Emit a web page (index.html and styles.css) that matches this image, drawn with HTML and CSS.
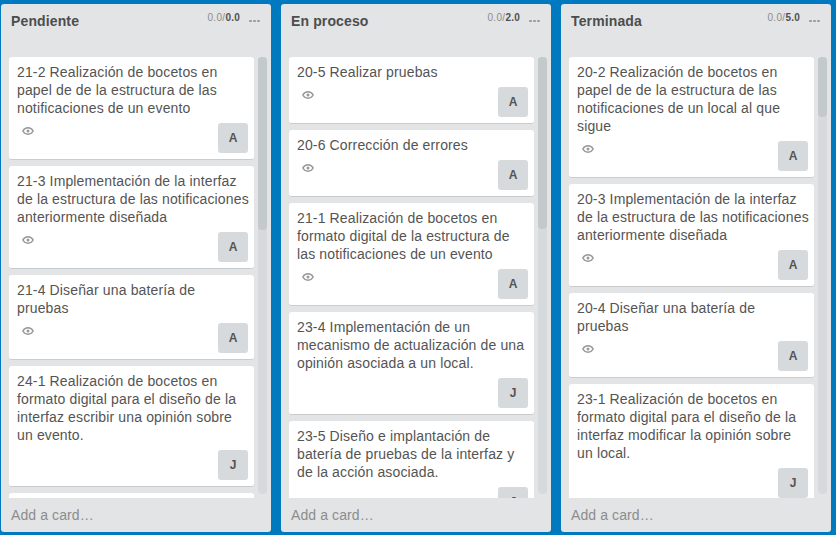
FILE: index.html
```
<!DOCTYPE html>
<html lang="es">
<head>
<meta charset="utf-8">
<title>Tablero</title>
<link rel="stylesheet" href="styles.css">
</head>
<body>
<svg class="defs" aria-hidden="true">
  <symbol id="eye" viewBox="0 0 12 8">
    <path d="M.8 4C2 1.800 3.800.8 6 .8S10 1.800 11.200 4C10 6.200 8.200 7.200 6 7.200S2 6.200.8 4Z" fill="none" stroke="currentColor" stroke-width="1.500"/>
    <circle cx="6" cy="4" r="1.500" fill="currentColor"/>
  </symbol>
</svg>
<main class="board">
  <section class="list">
    <header class="list-header"><h2>Pendiente</h2><span class="points">0.0/<b>0.0</b></span><span class="menu"><i></i><i></i><i></i></span></header>
    <div class="list-body">
      <div class="cards">
        <article class="card"><p>21-2 Realización de bocetos en papel de de la estructura de las notificaciones de un evento</p><footer><svg class="eye"><use href="#eye"/></svg><span class="member">A</span></footer></article>
        <article class="card"><p>21-3 Implementación de la interfaz de la estructura de las notificaciones anteriormente diseñada</p><footer><svg class="eye"><use href="#eye"/></svg><span class="member">A</span></footer></article>
        <article class="card"><p>21-4 Diseñar una batería de pruebas</p><footer><svg class="eye"><use href="#eye"/></svg><span class="member">A</span></footer></article>
        <article class="card"><p>24-1 Realización de bocetos en formato digital para el diseño de la interfaz escribir una opinión sobre un evento.</p><footer><span class="member">J</span></footer></article>
        <article class="card next"></article>
      </div>
      <div class="track"><div class="thumb thumb-first"></div></div>
    </div>
    <div class="add">Add a card…</div>
  </section>
  <section class="list">
    <header class="list-header"><h2>En proceso</h2><span class="points">0.0/<b>2.0</b></span><span class="menu"><i></i><i></i><i></i></span></header>
    <div class="list-body">
      <div class="cards">
        <article class="card"><p>20-5 Realizar pruebas</p><footer><svg class="eye"><use href="#eye"/></svg><span class="member">A</span></footer></article>
        <article class="card"><p>20-6 Corrección de errores</p><footer><svg class="eye"><use href="#eye"/></svg><span class="member">A</span></footer></article>
        <article class="card"><p>21-1 Realización de bocetos en formato digital de la estructura de las notificaciones de un evento</p><footer><svg class="eye"><use href="#eye"/></svg><span class="member">A</span></footer></article>
        <article class="card"><p>23-4 Implementación de un mecanismo de actualización de una opinión asociada a un local.</p><footer><span class="member">J</span></footer></article>
        <article class="card"><p>23-5 Diseño e implantación de batería de pruebas de la interfaz y de la acción asociada.</p><footer><span class="member">J</span></footer></article>
      </div>
      <div class="track"><div class="thumb thumb-second"></div></div>
    </div>
    <div class="add">Add a card…</div>
  </section>
  <section class="list">
    <header class="list-header"><h2>Terminada</h2><span class="points">0.0/<b>5.0</b></span><span class="menu"><i></i><i></i><i></i></span></header>
    <div class="list-body">
      <div class="cards">
        <article class="card"><p>20-2 Realización de bocetos en papel de de la estructura de las notificaciones de un local al que sigue</p><footer><svg class="eye"><use href="#eye"/></svg><span class="member">A</span></footer></article>
        <article class="card"><p>20-3 Implementación de la interfaz de la estructura de las notificaciones anteriormente diseñada</p><footer><svg class="eye"><use href="#eye"/></svg><span class="member">A</span></footer></article>
        <article class="card"><p>20-4 Diseñar una batería de pruebas</p><footer><svg class="eye"><use href="#eye"/></svg><span class="member">A</span></footer></article>
        <article class="card"><p>23-1 Realización de bocetos en formato digital para el diseño de la interfaz modificar la opinión sobre un local.</p><footer><span class="member">J</span></footer></article>
      </div>
      <div class="track"><div class="thumb thumb-third"></div></div>
    </div>
    <div class="add">Add a card…</div>
  </section>
</main>
</body>
</html>
```
FILE: styles.css
```
* { box-sizing: border-box; }
body {
  margin: 0;
  height: 535px;
  overflow: hidden;
  background: #0079bf;
  color: #545454;
  font: 14px/18px "Liberation Sans", Arial, sans-serif;
}
h2, p { margin: 0; }
.defs { display: none; }
.board { display: flex; gap: 10px; padding: 4px 0 3px 1px; height: 535px; }
.list {
  flex: 0 0 270px;
  display: flex;
  flex-direction: column;
  background: #e2e4e6;
  border-radius: 3px;
}
.list-header { display: flex; height: 53px; padding: 8px 12px 0 10px; }
.list-header h2 { flex: 1; color: #4d4d4d; font-size: 14px; line-height: 18px; letter-spacing: .13px; }
.points { font-size: 10px; line-height: 12px; letter-spacing: .35px; color: #8c8c8c; }
.points b { letter-spacing: .2px; color: #505050; }
.menu { display: flex; gap: 1px; margin: 8px -1px 0 9px; }
.menu i { width: 3px; height: 2px; border-radius: 1px; background: #999; }
.list-body { display: flex; height: 441px; padding: 0 4px 0 8px; gap: 4px; }
.cards { width: 245px; overflow: hidden; }
.card {
  margin-bottom: 6px;
  padding: 6px 6px 6px 8px;
  background: #fff;
  border-bottom: 1px solid #c9cccf;
  border-radius: 3px;
}
.card p { margin-right: -1px; letter-spacing: .14px; }
.card footer { display: flex; height: 36px; padding-top: 6px; }
.next { height: 60px; }
.eye { width: 12px; height: 8px; margin: 4px 0 0 5px; color: #999; }
.member {
  width: 30px;
  height: 30px;
  margin-left: auto;
  border-radius: 3px;
  background: #d6dadc;
  font-size: 12px;
  font-weight: bold;
  line-height: 30px;
  text-align: center;
}
.track { width: 9px; height: 437px; border-radius: 4px; background: #d6dadc; }
.thumb { border-radius: 4px; background: #c4c9cc; }
.thumb-first { height: 173px; }
.thumb-second { height: 172px; }
.thumb-third { height: 60px; }
.add { padding: 8px 10px; letter-spacing: .1px; color: #8c8c8c; }
```
